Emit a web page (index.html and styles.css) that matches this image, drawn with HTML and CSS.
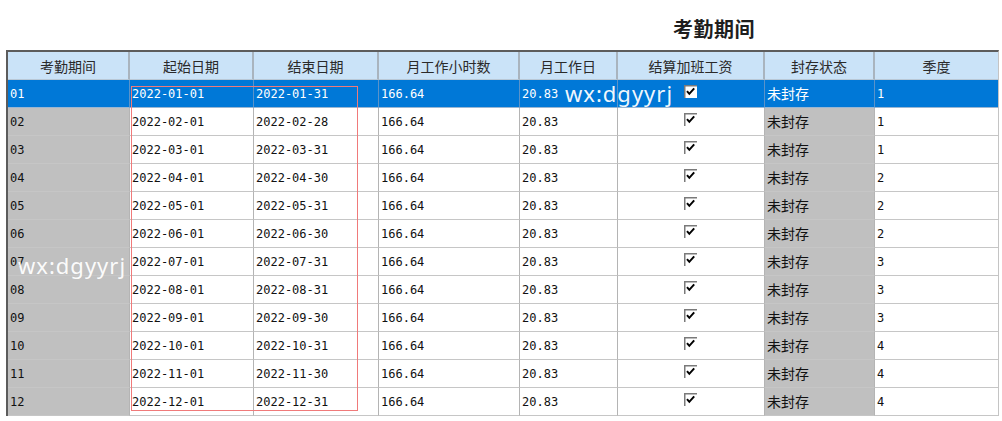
FILE: index.html
```html
<!DOCTYPE html>
<html lang="zh-CN">
<head>
<meta charset="utf-8">
<title>考勤期间</title>
<link rel="stylesheet" href="styles.css">
</head>
<body>
<div class="page">
  <div class="title-bar"><h1 class="title">考勤期间</h1></div>
  <div class="grid-wrap">
    <div class="grid">
      <div class="row head">
        <div class="cell">考勤期间</div><div class="cell">起始日期</div><div class="cell">结束日期</div><div class="cell">月工作小时数</div><div class="cell">月工作日</div><div class="cell">结算加班工资</div><div class="cell">封存状态</div><div class="cell">季度</div>
      </div>
      <div class="row sel">
        <div class="cell key">01</div><div class="cell">2022-01-01</div><div class="cell">2022-01-31</div><div class="cell">166.64</div><div class="cell">20.83</div><div class="cell chk"><svg class="box" viewBox="0 0 13 13" width="13" height="13"><rect x="0" y="0" width="13" height="13" fill="#fff"/><path d="M0.75 13V0.75H13" fill="none" stroke="#7a7a7a" stroke-width="1.5"/><path d="M3 6.2L5.3 8.8L10.2 3.4" fill="none" stroke="#000" stroke-width="2"/></svg></div><div class="cell state cjk">未封存</div><div class="cell">1</div>
      </div>
      <div class="row">
        <div class="cell key">02</div><div class="cell">2022-02-01</div><div class="cell">2022-02-28</div><div class="cell">166.64</div><div class="cell">20.83</div><div class="cell chk"><svg class="box" viewBox="0 0 13 13" width="13" height="13"><rect x="0" y="0" width="13" height="13" fill="#fff"/><path d="M0.75 13V0.75H13" fill="none" stroke="#7a7a7a" stroke-width="1.5"/><path d="M3 6.2L5.3 8.8L10.2 3.4" fill="none" stroke="#000" stroke-width="2"/></svg></div><div class="cell state cjk">未封存</div><div class="cell">1</div>
      </div>
      <div class="row">
        <div class="cell key">03</div><div class="cell">2022-03-01</div><div class="cell">2022-03-31</div><div class="cell">166.64</div><div class="cell">20.83</div><div class="cell chk"><svg class="box" viewBox="0 0 13 13" width="13" height="13"><rect x="0" y="0" width="13" height="13" fill="#fff"/><path d="M0.75 13V0.75H13" fill="none" stroke="#7a7a7a" stroke-width="1.5"/><path d="M3 6.2L5.3 8.8L10.2 3.4" fill="none" stroke="#000" stroke-width="2"/></svg></div><div class="cell state cjk">未封存</div><div class="cell">1</div>
      </div>
      <div class="row">
        <div class="cell key">04</div><div class="cell">2022-04-01</div><div class="cell">2022-04-30</div><div class="cell">166.64</div><div class="cell">20.83</div><div class="cell chk"><svg class="box" viewBox="0 0 13 13" width="13" height="13"><rect x="0" y="0" width="13" height="13" fill="#fff"/><path d="M0.75 13V0.75H13" fill="none" stroke="#7a7a7a" stroke-width="1.5"/><path d="M3 6.2L5.3 8.8L10.2 3.4" fill="none" stroke="#000" stroke-width="2"/></svg></div><div class="cell state cjk">未封存</div><div class="cell">2</div>
      </div>
      <div class="row">
        <div class="cell key">05</div><div class="cell">2022-05-01</div><div class="cell">2022-05-31</div><div class="cell">166.64</div><div class="cell">20.83</div><div class="cell chk"><svg class="box" viewBox="0 0 13 13" width="13" height="13"><rect x="0" y="0" width="13" height="13" fill="#fff"/><path d="M0.75 13V0.75H13" fill="none" stroke="#7a7a7a" stroke-width="1.5"/><path d="M3 6.2L5.3 8.8L10.2 3.4" fill="none" stroke="#000" stroke-width="2"/></svg></div><div class="cell state cjk">未封存</div><div class="cell">2</div>
      </div>
      <div class="row">
        <div class="cell key">06</div><div class="cell">2022-06-01</div><div class="cell">2022-06-30</div><div class="cell">166.64</div><div class="cell">20.83</div><div class="cell chk"><svg class="box" viewBox="0 0 13 13" width="13" height="13"><rect x="0" y="0" width="13" height="13" fill="#fff"/><path d="M0.75 13V0.75H13" fill="none" stroke="#7a7a7a" stroke-width="1.5"/><path d="M3 6.2L5.3 8.8L10.2 3.4" fill="none" stroke="#000" stroke-width="2"/></svg></div><div class="cell state cjk">未封存</div><div class="cell">2</div>
      </div>
      <div class="row">
        <div class="cell key">07</div><div class="cell">2022-07-01</div><div class="cell">2022-07-31</div><div class="cell">166.64</div><div class="cell">20.83</div><div class="cell chk"><svg class="box" viewBox="0 0 13 13" width="13" height="13"><rect x="0" y="0" width="13" height="13" fill="#fff"/><path d="M0.75 13V0.75H13" fill="none" stroke="#7a7a7a" stroke-width="1.5"/><path d="M3 6.2L5.3 8.8L10.2 3.4" fill="none" stroke="#000" stroke-width="2"/></svg></div><div class="cell state cjk">未封存</div><div class="cell">3</div>
      </div>
      <div class="row">
        <div class="cell key">08</div><div class="cell">2022-08-01</div><div class="cell">2022-08-31</div><div class="cell">166.64</div><div class="cell">20.83</div><div class="cell chk"><svg class="box" viewBox="0 0 13 13" width="13" height="13"><rect x="0" y="0" width="13" height="13" fill="#fff"/><path d="M0.75 13V0.75H13" fill="none" stroke="#7a7a7a" stroke-width="1.5"/><path d="M3 6.2L5.3 8.8L10.2 3.4" fill="none" stroke="#000" stroke-width="2"/></svg></div><div class="cell state cjk">未封存</div><div class="cell">3</div>
      </div>
      <div class="row">
        <div class="cell key">09</div><div class="cell">2022-09-01</div><div class="cell">2022-09-30</div><div class="cell">166.64</div><div class="cell">20.83</div><div class="cell chk"><svg class="box" viewBox="0 0 13 13" width="13" height="13"><rect x="0" y="0" width="13" height="13" fill="#fff"/><path d="M0.75 13V0.75H13" fill="none" stroke="#7a7a7a" stroke-width="1.5"/><path d="M3 6.2L5.3 8.8L10.2 3.4" fill="none" stroke="#000" stroke-width="2"/></svg></div><div class="cell state cjk">未封存</div><div class="cell">3</div>
      </div>
      <div class="row">
        <div class="cell key">10</div><div class="cell">2022-10-01</div><div class="cell">2022-10-31</div><div class="cell">166.64</div><div class="cell">20.83</div><div class="cell chk"><svg class="box" viewBox="0 0 13 13" width="13" height="13"><rect x="0" y="0" width="13" height="13" fill="#fff"/><path d="M0.75 13V0.75H13" fill="none" stroke="#7a7a7a" stroke-width="1.5"/><path d="M3 6.2L5.3 8.8L10.2 3.4" fill="none" stroke="#000" stroke-width="2"/></svg></div><div class="cell state cjk">未封存</div><div class="cell">4</div>
      </div>
      <div class="row">
        <div class="cell key">11</div><div class="cell">2022-11-01</div><div class="cell">2022-11-30</div><div class="cell">166.64</div><div class="cell">20.83</div><div class="cell chk"><svg class="box" viewBox="0 0 13 13" width="13" height="13"><rect x="0" y="0" width="13" height="13" fill="#fff"/><path d="M0.75 13V0.75H13" fill="none" stroke="#7a7a7a" stroke-width="1.5"/><path d="M3 6.2L5.3 8.8L10.2 3.4" fill="none" stroke="#000" stroke-width="2"/></svg></div><div class="cell state cjk">未封存</div><div class="cell">4</div>
      </div>
      <div class="row">
        <div class="cell key">12</div><div class="cell">2022-12-01</div><div class="cell">2022-12-31</div><div class="cell">166.64</div><div class="cell">20.83</div><div class="cell chk"><svg class="box" viewBox="0 0 13 13" width="13" height="13"><rect x="0" y="0" width="13" height="13" fill="#fff"/><path d="M0.75 13V0.75H13" fill="none" stroke="#7a7a7a" stroke-width="1.5"/><path d="M3 6.2L5.3 8.8L10.2 3.4" fill="none" stroke="#000" stroke-width="2"/></svg></div><div class="cell state cjk">未封存</div><div class="cell">4</div>
      </div>
    </div>
    <div class="mark-box"></div>
    <div class="watermark wm-top">wx:dgyyrj</div>
    <div class="watermark wm-left">wx:dgyyrj</div>
  </div>
</div>
</body>
</html>
```

FILE: styles.css
```css
html, body {
  margin: 0;
  padding: 0;
  background: #ffffff;
}

.page {
  width: 1002px;
  height: 421px;
  overflow: hidden;
  padding-left: 6px;
  box-sizing: border-box;
}

.title-bar {
  height: 50px;
  box-sizing: border-box;
  padding: 16px 0 0 667px;
}

.title {
  margin: 0;
  font-family: "Noto Sans CJK SC", sans-serif;
  font-size: 20px;
  line-height: 26px;
  font-weight: 700;
  color: #1e1e1e;
  letter-spacing: 0.5px;
}

.grid-wrap {
  position: relative;
  width: 993px;
}

.grid {
  border-top: 2px solid #5c5c5c;
  border-left: 2px solid #5c5c5c;
  border-right: 1px solid #c4c4c4;
  font-family: "DejaVu Sans Mono", "Noto Sans CJK SC", monospace;
  font-size: 12px;
  color: #111;
}

.row {
  display: grid;
  grid-template-columns: 122px 124px 125px 141px 98px 147px 110px 123px;
  height: 28px;
}

.cell {
  box-sizing: border-box;
  border-right: 1px solid #b4b4b4;
  border-bottom: 1px solid #c6c6c6;
  padding-left: 2px;
  display: flex;
  align-items: center;
  white-space: nowrap;
  overflow: hidden;
}

.cell:last-child {
  border-right: none;
}

.head .cell {
  background: #cae3f8;
  justify-content: center;
  padding-left: 0;
  font-family: "Noto Sans CJK SC", sans-serif;
  font-size: 14px;
  color: #2a2a2a;
  border-right: 2px solid #a9b4be;
  border-bottom: 1px solid #b9c8d6;
}

.head .cell:last-child {
  border-right: none;
}

.key {
  background: #c0c0c0;
}

.state {
  background: #c0c0c0;
}

.cjk {
  font-family: "Noto Sans CJK SC", sans-serif;
  font-size: 14px;
  padding-bottom: 2px;
}

.chk {
  justify-content: center;
  padding-left: 0;
  padding-right: 1px;
}

.box {
  display: block;
  margin-top: -4px;
}

.sel .cell {
  background: #0078d7;
  color: #ffffff;
  border-right-color: #5b93c9;
  border-bottom-color: #9ab6d2;
}

.mark-box {
  position: absolute;
  left: 125px;
  top: 36px;
  width: 227px;
  height: 325px;
  border: 1px solid #f07a7a;
  box-sizing: border-box;
  pointer-events: none;
}

.watermark {
  position: absolute;
  font-family: "Noto Sans", sans-serif;
  font-size: 22px;
  line-height: 22px;
  color: rgba(255, 255, 255, 0.95);
  letter-spacing: 1px;
  white-space: nowrap;
}

.wm-top {
  left: 559px;
  top: 32px;
}

.wm-left {
  left: 12px;
  top: 204px;
}
```
